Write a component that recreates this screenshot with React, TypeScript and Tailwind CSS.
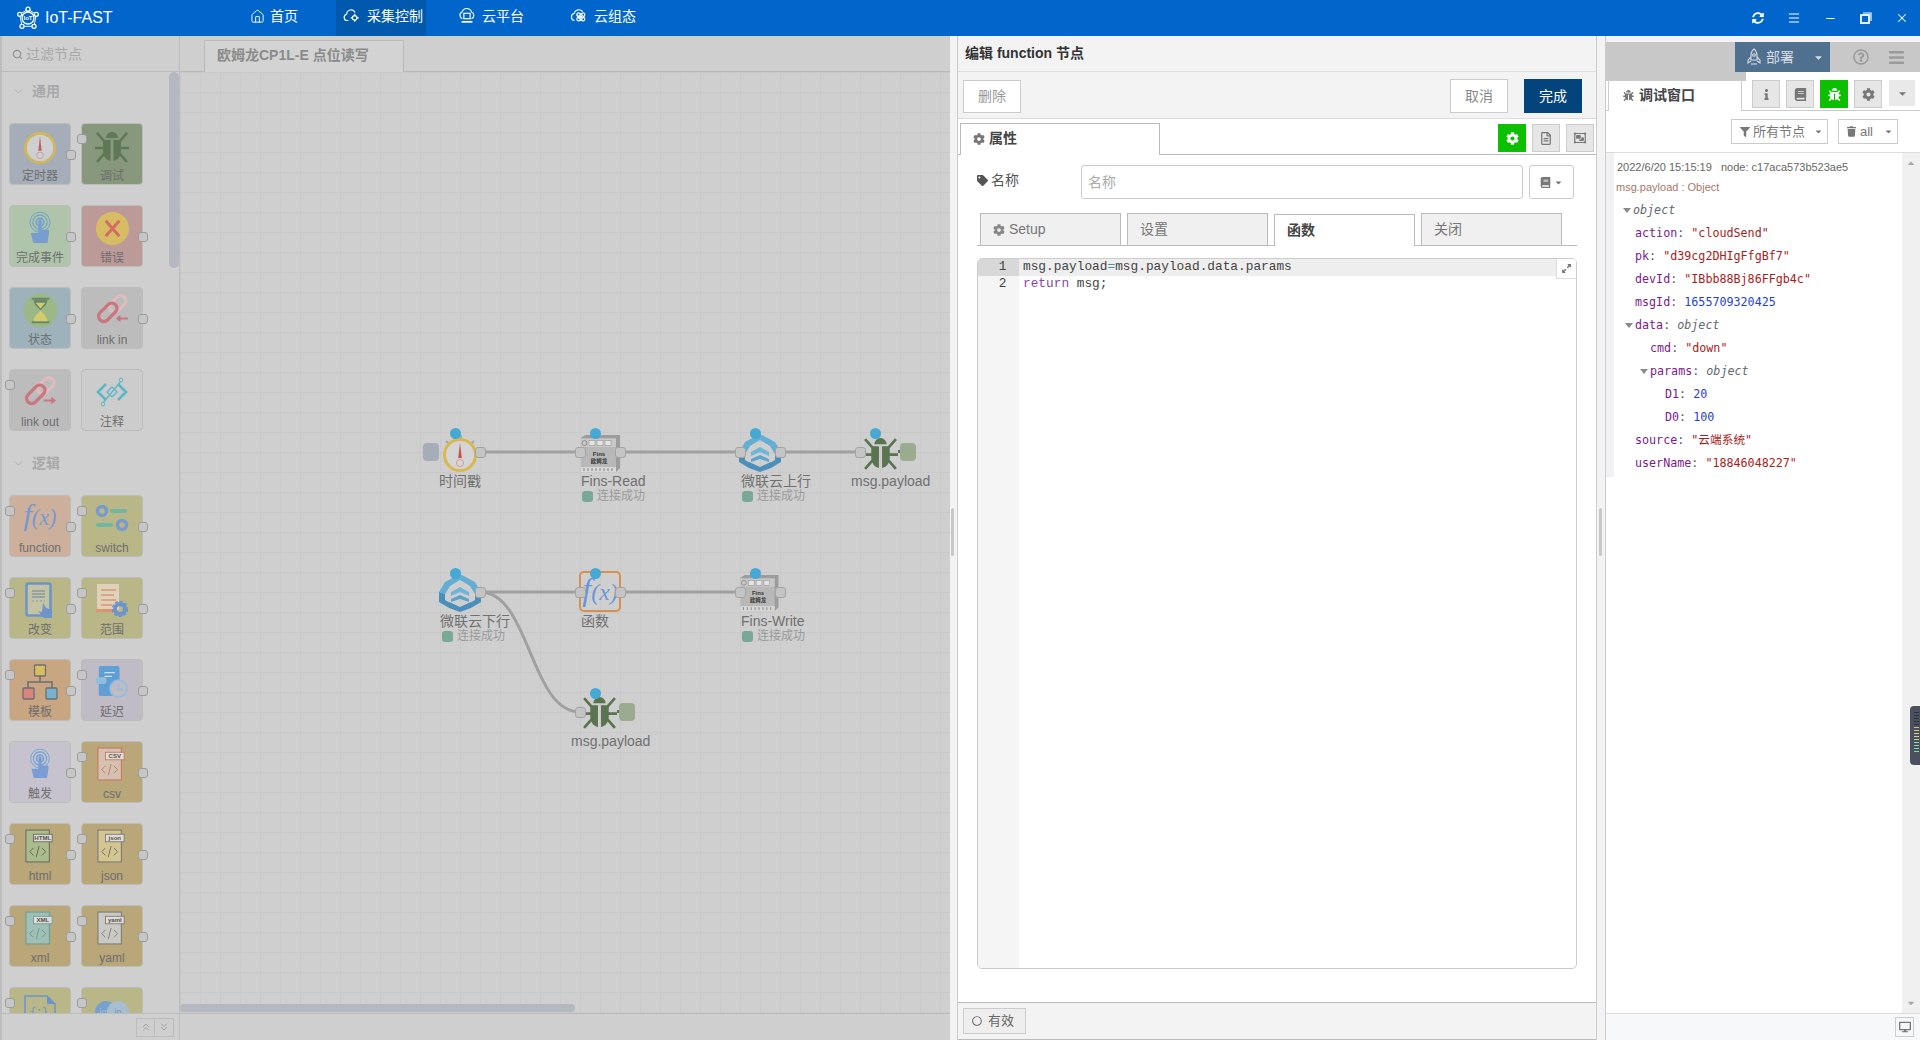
import React from 'react';
import { Home, ChevronDown, Search, ChevronsUp, ChevronsDown, Minus, X, Menu } from 'lucide-react';
import { FaCog, FaTag, FaBook, FaBug, FaFilter, FaTrash, FaInfo, FaRegFileAlt, FaCaretDown, FaRegQuestionCircle, FaBars, FaRegCircle, FaDesktop, FaSyncAlt, FaCaretUp } from 'react-icons/fa';
import { FaRegObjectGroup, FaUpRightAndDownLeftFromCenter } from 'react-icons/fa6';

const sans = { fontFamily: '"Liberation Sans", "Noto Sans CJK SC", sans-serif' };

// ---- node icons ----
const Stopwatch = ({ className = '' }: { className?: string }) => (
  <svg viewBox="0 0 36 38" className={className}>
    <path d="M4 7l3 3M32 7l-3 3" stroke="#a9a9a9" strokeWidth="2" />
    <rect x="16" y="1" width="4" height="5" fill="#a9a9a9" />
    <circle cx="18" cy="21" r="15.5" fill="#d5d5d5" stroke="#d8b84f" strokeWidth="3" />
    <path d="M18 9l1.8 15h-3.6z" fill="#c4524a" />
    <circle cx="18" cy="29" r="3.6" fill="none" stroke="#dc9a9a" />
  </svg>
);

const Bug = ({ className = '' }: { className?: string }) => (
  <svg viewBox="0 0 34 36" className={className}>
    <g fill="#5a7350">
      <path d="M11 10a6 6 0 0 1 12 0z" />
      <path d="M8 12h7.5v21C11 32 8 28 8 23z" />
      <path d="M26 12h-7.5v21c4.500-1 7.500-5 7.500-10z" />
    </g>
    <path d="M2 5l7 8M32 5l-7 8M0 20h9M34 20h-9M2 34l7-8M32 34l-7-8" stroke="#5a7350" strokeWidth="2.600" />
  </svg>
);

const Touch = ({ className = '' }: { className?: string }) => (
  <svg viewBox="0 0 36 40" className={className}>
    <g fill="none" stroke="#5f9fd8">
      <circle cx="18" cy="13" r="12" strokeWidth="1.200" />
      <circle cx="18" cy="13" r="8.500" strokeWidth="1.500" />
      <circle cx="18" cy="13" r="4.500" strokeWidth="2" />
    </g>
    <path d="M16 12a2 2 0 0 1 4 0v10h7c2 0 2 1 2 3l-2 13H10L7 26h9z" fill="#6f97d8" />
  </svg>
);

const ErrorBadge = ({ className = '' }: { className?: string }) => (
  <svg viewBox="0 0 36 36" className={className}>
    <circle cx="18" cy="18" r="17" fill="#dcc25c" />
    <path d="M11 10l14 16M25 10L11 26" stroke="#d8645c" strokeWidth="3" />
  </svg>
);

const Hourglass = ({ className = '' }: { className?: string }) => (
  <svg viewBox="0 0 36 36" className={className}>
    <circle cx="18" cy="18" r="17.500" fill="#9dba7e" />
    <path d="M9 6h18M9 30h18" stroke="#5f7f5c" strokeWidth="2" />
    <path d="M11 7h14c0 6-5 8-7 11-2-3-7-5-7-11z" fill="#5f7f5c" />
    <path d="M18 18c2 3 7 5 7 11H11c0-6 5-8 7-11z" fill="#dcd25c" />
    <path d="M13 10h10l-5 6z" fill="#dcd25c" />
  </svg>
);

const LinkIcon = ({ className = '', dir }: { className?: string; dir: 'in' | 'out' }) => (
  <svg viewBox="0 0 34 34" className={className}>
    <rect x="13" y="5" width="20" height="11" rx="5.500" transform="rotate(-45 23 10.500)" fill="none" stroke="#e4bcc0" strokeWidth="3.500" />
    <rect x="1" y="14" width="23" height="11" rx="5.500" transform="rotate(-45 12.500 19.500)" fill="none" stroke="#cd6a74" strokeWidth="3.500" />
    {dir === 'in' ? (
      <path d="M34 25h-8v-3l-5 4 5 4v-3h8z" fill="#cd6a74" />
    ) : (
      <path d="M21 27h8v3l5-4-5-4v3h-8z" fill="#cd6a74" />
    )}
  </svg>
);

const Comment = ({ className = '' }: { className?: string }) => (
  <svg viewBox="0 0 32 32" className={className}>
    <path d="M10 8L2 16l8 8M22 8l8 8-8 8" fill="none" stroke="#45b4c8" strokeWidth="2.500" />
    <path d="M16 11l-5 5 5 5M16 11l5 5-5 5M7 27L25 5" fill="none" stroke="#45b4c8" strokeWidth="1.200" />
    <circle cx="25" cy="4" r="1.800" fill="#d0d0d0" stroke="#45b4c8" />
    <circle cx="7" cy="28" r="1.800" fill="#d0d0d0" stroke="#45b4c8" />
  </svg>
);

const Fx = ({ className = '' }: { className?: string }) => (
  <svg viewBox="0 0 40 36" className={className}>
    <text x="20" y="26" textAnchor="middle" fontFamily='"Liberation Serif", serif' fontStyle="italic" fill="#6a96d8">
      <tspan fontSize="34">f</tspan>
      <tspan fontSize="25">(x)</tspan>
    </text>
  </svg>
);

const SwitchIcon = ({ className = '' }: { className?: string }) => (
  <svg viewBox="0 0 34 28" className={className}>
    <circle cx="7" cy="7" r="4.500" fill="none" stroke="#6f97d8" strokeWidth="3.500" />
    <rect x="15" y="5" width="17" height="4" rx="2" fill="#63b8a8" />
    <rect x="1" y="19" width="17" height="4" rx="2" fill="#63b8a8" />
    <circle cx="27" cy="21" r="4.500" fill="none" stroke="#6f97d8" strokeWidth="3.500" />
  </svg>
);

const ChangeIcon = ({ className = '' }: { className?: string }) => (
  <svg viewBox="0 0 30 36" className={className}>
    <rect x="1.500" y="1.500" width="24" height="32" rx="2" fill="#c6c6a8" stroke="#5f8fd8" strokeWidth="2.500" />
    <path d="M7 9h13M7 12h13M7 15h13" stroke="#7f94a8" strokeWidth="1.500" />
    <path d="M7 19h13" stroke="#7f94a8" strokeDasharray="2 2" />
    <path d="M18 21l3 5 6 2v8H19l-6-7 4 1z" fill="#5f8fd8" />
  </svg>
);

const RangeIcon = ({ className = '' }: { className?: string }) => (
  <svg viewBox="0 0 32 34" className={className}>
    <rect x="1" y="1" width="22" height="26" fill="#e6d6c4" />
    <path d="M5 7h15M5 12h13M5 17h15M5 22h11" stroke="#e0906c" strokeWidth="1.700" />
    <rect x="0" y="26" width="18" height="3" fill="#e0906c" />
    <circle cx="24" cy="26" r="5" fill="none" stroke="#5f8fd8" strokeWidth="4" />
    <circle cx="24" cy="26" r="7.500" fill="none" stroke="#5f8fd8" strokeWidth="1.500" strokeDasharray="3 2" />
  </svg>
);

const TemplateIcon = ({ className = '' }: { className?: string }) => (
  <svg viewBox="0 0 36 36" className={className}>
    <path d="M18 12v6M6 24v-6h24v6" fill="none" stroke="#5b6670" strokeWidth="1.600" />
    <rect x="12.500" y="1" width="11" height="11" rx="1" fill="#dcc25c" stroke="#5b6670" strokeWidth="1.300" />
    <rect x="1" y="24" width="11" height="11" rx="1" fill="#dc7f80" stroke="#5b6670" strokeWidth="1.300" />
    <rect x="24" y="24" width="11" height="11" rx="1" fill="#6cb4dc" stroke="#5b6670" strokeWidth="1.300" />
  </svg>
);

const DelayIcon = ({ className = '' }: { className?: string }) => (
  <svg viewBox="0 0 34 34" className={className}>
    <rect x="3" y="0" width="22" height="32" rx="2" fill="#4f9bd8" />
    <path d="M9 7h11M9 11h8" stroke="#d5e4f0" strokeWidth="1.500" />
    <rect x="0" y="12" width="11" height="7" rx="2" fill="#8fbce0" />
    <circle cx="24" cy="24" r="9" fill="#c0bcc6" stroke="#8fbce0" strokeWidth="2" />
    <path d="M24 19v6h5" fill="none" stroke="#8fbce0" strokeWidth="2" />
  </svg>
);

const DocIcon = ({ className = '', tag, fill, stroke, code }: { className?: string; tag: string; fill: string; stroke: string; code: string }) => (
  <svg viewBox="0 0 32 36" className={className}>
    <rect x="1" y="1" width="25" height="34" fill={fill} stroke={stroke} strokeWidth="1.200" />
    <rect x="9" y="5.500" width="20" height="8" fill="#e6e6e6" stroke={stroke} />
    <text x="19" y="12" textAnchor="middle" fontSize="6.500" fontWeight="700" fontFamily='"Liberation Sans", sans-serif' fill="#444">{tag}</text>
    <path d="M9 20l-4 4 4 4M18 20l4 4-4 4M15 18l-3 12" fill="none" stroke={code} strokeWidth="1" />
  </svg>
);

const JsonFile = ({ className = '' }: { className?: string }) => (
  <svg viewBox="0 0 34 30" className={className}>
    <path d="M2 1h22l8 8v20H2z" fill="none" stroke="#5f8fd8" strokeWidth="1.500" />
    <path d="M24 1v8h8z" fill="#5f8fd8" />
    <text x="16" y="20" textAnchor="middle" fontSize="10" fontFamily='"Liberation Mono", monospace' fill="#5f8fd8">{'{;}'}</text>
  </svg>
);

const InIcon = ({ className = '' }: { className?: string }) => (
  <svg viewBox="0 0 36 20" className={className}>
    <circle cx="12" cy="12" r="11" fill="#6f9fd8" />
    <circle cx="24" cy="12" r="11" fill="#a5c0dc" />
    <text x="24" y="15" textAnchor="middle" fontSize="9" fontFamily='"Liberation Sans", sans-serif' fill="#5f8fd8">in</text>
    <text x="9" y="15" textAnchor="middle" fontSize="9" fontFamily='"Liberation Sans", sans-serif' fill="#a5c0dc">io</text>
  </svg>
);

const Fins = ({ className = '' }: { className?: string }) => (
  <svg viewBox="0 0 40 38" className={className}>
    <path d="M0 3l4-3h35v33l-4 4z" fill="#9c9c9c" />
    <rect x="0" y="3" width="35" height="34" fill="#b8b8b8" />
    <rect x="0" y="4" width="35" height="8" fill="#c8c8c8" />
    <circle cx="3.500" cy="8" r="2.500" fill="none" stroke="#777" strokeWidth=".7" />
    <rect x="8" y="5.500" width="6" height="5" fill="#e4e4e4" stroke="#888" strokeWidth=".5" />
    <rect x="16" y="5.500" width="6" height="5" fill="#e4e4e4" stroke="#888" strokeWidth=".5" />
    <rect x="24" y="5.500" width="6" height="5" fill="#e4e4e4" stroke="#888" strokeWidth=".5" />
    <text x="18" y="21" textAnchor="middle" fontSize="6" fontWeight="700" fontFamily='"Liberation Sans", sans-serif' fill="#333">Fins</text>
    <text x="18" y="27.500" textAnchor="middle" fontSize="5.500" fontWeight="700" fontFamily='"Noto Sans CJK SC", sans-serif' fill="#333">欧姆龙</text>
    <rect x="0" y="32" width="35" height="5" fill="#d8d8d8" />
    <path d="M3 33v3M7 33v3M11 33v3M15 33v3M19 33v3M23 33v3M27 33v3M31 33v3" stroke="#666" strokeWidth=".7" />
  </svg>
);

const Weilian = ({ className = '' }: { className?: string }) => (
  <svg viewBox="0 0 42 38" className={className}>
    <path d="M21 0L6 8 0 18l6 2 5-8 10-6z" fill="#64aed4" />
    <path d="M21 0l15 8 6 10-6 2-5-8-10-6z" fill="#64aed4" />
    <path d="M0 18v10l10 6 1-5-5-3v-6z" fill="#4a8fbc" />
    <path d="M42 18v10l-10 6-1-5 5-3v-6z" fill="#4a8fbc" />
    <path d="M10 28l11 5 11-5v6l-11 4-11-4z" fill="#4a8fbc" />
    <path d="M12 18l9-5 9 5v4l-9-4-9 4z" fill="#6fb5d8" />
    <path d="M12 25l9-4 9 4v3l-9-3-9 3z" fill="#5aa5cc" />
  </svg>
);

const CloudNav = ({ kind }: { kind: 'gear' | 'pc' | 'atom' }) => (
  <svg viewBox="0 0 20 20" className="w-[18px] h-[18px]" fill="none" stroke="white" strokeWidth="1.300">
    {kind === 'gear' && (
      <>
        <path d="M6 15H5a3.500 3.500 0 0 1-1-6.900A5 5 0 0 1 13.500 6" />
        <circle cx="13" cy="12" r="2.500" />
        <path d="M13 7.500v2M13 14.500v2M8.500 12h2M15.500 12h2" />
      </>
    )}
    {kind === 'pc' && (
      <>
        <path d="M5 13a4 4 0 0 1-.5-7.500 5.500 5.500 0 0 1 10.500 0A4 4 0 0 1 15 13" />
        <rect x="6.500" y="7" width="7" height="6" />
        <path d="M4 16.500h12" strokeWidth="2" />
      </>
    )}
    {kind === 'atom' && (
      <>
        <path d="M5 15a4 4 0 0 1-.5-7.800A5.500 5.500 0 0 1 14 5" />
        <circle cx="12" cy="11" r="1.300" fill="white" />
        <ellipse cx="12" cy="11" rx="5.500" ry="2.500" transform="rotate(45 12 11)" />
        <ellipse cx="12" cy="11" rx="5.500" ry="2.500" transform="rotate(-45 12 11)" />
      </>
    )}
  </svg>
);

// ---- palette ----
interface TileProps {
  label?: string;
  bg: string;
  icon: React.ReactNode;
  input?: boolean;
  output?: boolean;
}

const Tile = ({ label, bg, icon, input = true, output = true }: TileProps) => (
  <div className={`relative w-[62px] h-[62px] rounded-[4px] border border-[#bcbcbc] ${bg}`}>
    <div className="h-[44px] flex items-center justify-center opacity-85">{icon}</div>
    {label && <div className="text-center text-[12px] leading-[16px] text-[#6e6e6e] whitespace-nowrap">{label}</div>}
    {input && <span className="absolute left-[-5px] top-[10px] w-[10px] h-[10px] rounded-[3px] bg-[#c6c6c6] border border-[#9c9c9c]" />}
    {output && <span className="absolute right-[-6px] top-[26px] w-[10px] h-[10px] rounded-[3px] bg-[#c6c6c6] border border-[#9c9c9c]" />}
  </div>
);

const generalTiles: TileProps[] = [
  { label: '定时器', bg: 'bg-[#a5adb9]', input: false, icon: <Stopwatch className="w-[34px] h-[36px]" /> },
  { label: '调试', bg: 'bg-[#87987c]', output: false, icon: <Bug className="w-[34px] h-[36px]" /> },
  { label: '完成事件', bg: 'bg-[#afc4ab]', input: false, icon: <Touch className="w-[30px] h-[36px]" /> },
  { label: '错误', bg: 'bg-[#bc9a97]', input: false, icon: <ErrorBadge className="w-[35px] h-[35px]" /> },
  { label: '状态', bg: 'bg-[#9db2bb]', input: false, icon: <Hourglass className="w-[35px] h-[35px]" /> },
  { label: 'link in', bg: 'bg-[#bcbcbc]', input: false, icon: <LinkIcon dir="in" className="w-[32px] h-[32px]" /> },
  { label: 'link out', bg: 'bg-[#bcbcbc]', output: false, icon: <LinkIcon dir="out" className="w-[32px] h-[32px]" /> },
  { label: '注释', bg: 'bg-[#cccccc]', input: false, output: false, icon: <Comment className="w-[32px] h-[32px]" /> },
];

const logicTiles: TileProps[] = [
  { label: 'function', bg: 'bg-[#ccb09c]', icon: <Fx className="w-[36px] h-[32px]" /> },
  { label: 'switch', bg: 'bg-[#b9b687]', icon: <SwitchIcon className="w-[34px] h-[28px]" /> },
  { label: '改变', bg: 'bg-[#b9b687]', icon: <ChangeIcon className="w-[30px] h-[36px]" /> },
  { label: '范围', bg: 'bg-[#b9b687]', icon: <RangeIcon className="w-[32px] h-[34px]" /> },
  { label: '模板', bg: 'bg-[#c9a682]', icon: <TemplateIcon className="w-[36px] h-[36px]" /> },
  { label: '延迟', bg: 'bg-[#c0bcc6]', icon: <DelayIcon className="w-[32px] h-[34px]" /> },
  { label: '触发', bg: 'bg-[#c6c3cf]', input: false, icon: <Touch className="w-[28px] h-[34px]" /> },
  { label: 'csv', bg: 'bg-[#b9a679]', icon: <DocIcon tag="CSV" fill="#d8c8bc" stroke="#d0705c" code="#d0705c" className="w-[30px] h-[36px]" /> },
  { label: 'html', bg: 'bg-[#b9a679]', icon: <DocIcon tag="HTML" fill="#a8bf90" stroke="#5f6a60" code="#4f5a50" className="w-[30px] h-[36px]" /> },
  { label: 'json', bg: 'bg-[#b9a679]', icon: <DocIcon tag="json" fill="#d8cc98" stroke="#777" code="#666" className="w-[30px] h-[36px]" /> },
  { label: 'xml', bg: 'bg-[#b9a679]', icon: <DocIcon tag="XML" fill="#9fc4c0" stroke="#5ca0a4" code="#4f9aa4" className="w-[30px] h-[36px]" /> },
  { label: 'yaml', bg: 'bg-[#b9a679]', icon: <DocIcon tag="yaml" fill="#ccd0d4" stroke="#777" code="#777" className="w-[30px] h-[36px]" /> },
  { bg: 'bg-[#b9b687]', icon: <JsonFile className="w-[34px] h-[30px]" /> },
  { bg: 'bg-[#b9b687]', icon: <InIcon className="w-[36px] h-[28px]" /> },
];

const Section = ({ title, tiles, className = '' }: { title: string; tiles: TileProps[]; className?: string }) => (
  <div className={className}>
    <div className="h-[38px] mb-[13px] flex items-center pl-[10px] gap-[7px] text-[#a8a8a8]">
      <ChevronDown size={13} strokeWidth={1.500} />
      <span className="text-[14px] font-bold">{title}</span>
    </div>
    <div className="grid grid-cols-[62px_62px] gap-x-[10px] gap-y-[20px] pl-[7px]">
      {tiles.map((t, i) => <Tile key={i} {...t} />)}
    </div>
  </div>
);

// ---- flow canvas helpers ----
const Port = ({ className }: { className: string }) => (
  <span className={`absolute w-[11px] h-[11px] rounded-[3px] bg-[#c4c4c4] border border-[#a3a3a3] ${className}`} />
);
const Dot = ({ className }: { className: string }) => (
  <span className={`absolute w-[11px] h-[11px] rounded-full bg-[#45a9d4] ${className}`} />
);
const Label = ({ className, children }: { className: string; children: React.ReactNode }) => (
  <span className={`absolute text-[14px] leading-[16px] text-[#707070] whitespace-nowrap ${className}`}>{children}</span>
);
const Status = ({ className }: { className: string }) => (
  <span className={`absolute flex items-center gap-[4px] text-[12px] leading-[12px] text-[#9a9a9a] whitespace-nowrap ${className}`}>
    <span className="w-[11px] h-[11px] rounded-[3px] bg-[#7aa896]" />
    连接成功
  </span>
);

const code = { fontFamily: '"Liberation Mono", monospace' };
const tree = { fontFamily: '"DejaVu Sans Mono", "Noto Sans CJK SC", monospace' };

const Key = ({ children }: { children: React.ReactNode }) => <span className="text-[#7d1a8c]">{children}</span>;
const Str = ({ children }: { children: React.ReactNode }) => <span className="text-[#a81c1c]">{children}</span>;
const Num = ({ children }: { children: React.ReactNode }) => <span className="text-[#1f3fd0]">{children}</span>;
const Obj = () => <span className="italic text-[#5f6a72]">object</span>;
const Arrow = () => (
  <svg viewBox="0 0 8 5" className="w-[8px] h-[5px] mr-[2px] shrink-0" fill="#8a8a8a"><path d="M0 0h8L4 5z" /></svg>
);

const Row = ({ className = '', children }: { className?: string; children: React.ReactNode }) => (
  <div className={`h-[23px] flex items-center whitespace-pre ${className}`}>{children}</div>
);

export default function App() {
  return (
    <div className="w-[1920px] h-[1040px] flex flex-col overflow-hidden bg-white" style={sans}>
      {/* top bar */}
      <header className="h-[36px] shrink-0 bg-[#0066cc] text-white flex items-center">
        <div className="w-[204px] pl-[16px] flex items-center gap-[5px]">
          <svg viewBox="0 0 26 26" className="w-[24px] h-[24px]" fill="none" stroke="white" strokeWidth="1.400">
            <path d="M13 3.500L4 9l2.500 13h13L22 9z" strokeWidth="1" />
            <circle cx="13" cy="13" r="6.500" fill="#0066cc" />
            <circle cx="13" cy="3.500" r="2.200" fill="#0066cc" />
            <circle cx="4" cy="9" r="2.200" fill="#0066cc" />
            <circle cx="22" cy="9" r="2.200" fill="#0066cc" />
            <circle cx="6.500" cy="22" r="2.200" fill="#0066cc" />
            <circle cx="19.500" cy="22" r="2.200" fill="#0066cc" />
            <text x="13" y="15.500" textAnchor="middle" fontSize="6.500" fontWeight="700" stroke="none" fill="white">IoT</text>
          </svg>
          <span className="text-[16px] leading-[36px]">IoT-FAST</span>
        </div>
        <nav className="flex items-center h-full pl-[46px] text-[14px]">
          <div className="flex items-center gap-[5px] w-[86px] pb-[4px]"><Home size={15} strokeWidth={1.500} />首页</div>
          <div className="flex items-center gap-[6px] h-full w-[90px] pl-[7px] pb-[4px] bg-[#0059ac]"><CloudNav kind="gear" />采集控制</div>
          <div className="flex items-center gap-[6px] w-[110px] pl-[32px] pb-[4px]"><CloudNav kind="pc" />云平台</div>
          <div className="flex items-center gap-[6px] pl-[34px] pb-[4px]"><CloudNav kind="atom" />云组态</div>
        </nav>
        <div className="ml-auto flex items-center h-full">
          <FaSyncAlt className="w-[12px] h-[12px] mr-[23px]" />
          <Menu size={14} strokeWidth={1.800} className="mr-[23px]" />
          <Minus size={13} strokeWidth={1.800} className="mr-[23px]" />
          <svg viewBox="0 0 12 12" className="w-[12px] h-[12px] mr-[23px]" fill="none" stroke="white" strokeWidth="1.200">
            <rect x="1" y="3" width="8" height="8" strokeWidth="1.800" />
            <path d="M3 1h8v8" />
          </svg>
          <X size={14} strokeWidth={1.800} className="mr-[11px]" />
        </div>
      </header>

      <div className="flex-1 flex min-h-0">
        {/* dimmed workspace */}
        <div className="w-[950px] shrink-0 flex bg-[#cfcfcf]">
          <aside className="w-[180px] shrink-0 flex flex-col border-l-2 border-r border-[#bcbcbc]">
            <div className="h-[36px] shrink-0 flex items-center pl-[10px] pt-[1px] gap-[3px] text-[14px] text-[#a8a8a8] border-b border-[#bcbcbc]">
              <Search size={11} strokeWidth={2.500} className="text-[#8f8f8f]" />
              过滤节点
            </div>
            <div className="relative flex-1 min-h-0 overflow-hidden">
              <Section title="通用" tiles={generalTiles} />
              <Section title="逻辑" tiles={logicTiles} className="mt-[13px]" />
              <div className="absolute right-0 top-0 w-[10px] h-[196px] rounded-[5px] bg-[#b5b8c0]" />
            </div>
            <div className="h-[27px] shrink-0 border-t border-[#bcbcbc] flex justify-end items-center pr-[5px] bg-[#cfcfcf]">
              <span className="w-[19px] h-[19px] border border-[#bcbcbc] flex items-center justify-center text-[#a0a0a0]"><ChevronsUp size={12} /></span>
              <span className="w-[19px] h-[19px] border border-l-0 border-[#bcbcbc] flex items-center justify-center text-[#a0a0a0]"><ChevronsDown size={12} /></span>
            </div>
          </aside>

          <main className="flex-1 min-w-0 flex flex-col">
            <div className="h-[36px] shrink-0 border-b border-[#b8b8b8] pl-[24px] pt-[4px]">
              <div className="w-[200px] h-[32px] border border-b-0 border-[#b8b8b8] bg-[#d2d3d2] pl-[12px] text-[14px] leading-[29px] font-bold text-[#8a8a8a] whitespace-nowrap">欧姆龙CP1L-E 点位读写</div>
            </div>
            <div className="relative flex-1 min-h-0 overflow-hidden bg-[linear-gradient(#c9c9c9_1px,transparent_1px),linear-gradient(90deg,#c9c9c9_1px,transparent_1px)] bg-[size:20px_20px]">
              <svg className="absolute inset-0 w-full h-full" fill="none" stroke="#a0a0a0" strokeWidth="3">
                <path d="M300 380H400M440 380H560M600 380H680" />
                <path d="M300 520H400M440 520H560" />
                <path d="M300 520C350 520 350 640 400 640" />
              </svg>

              {/* row one */}
              <span className="absolute left-[243px] top-[371px] w-[16px] h-[18px] rounded-[4px] bg-[#a5adb9]" />
              <Stopwatch className="absolute left-[262px] top-[362px] w-[36px] h-[38px]" />
              <Dot className="left-[270px] top-[356px]" />
              <Port className="left-[295px] top-[375px]" />
              <Label className="left-[259px] top-[401px]">时间戳</Label>

              <Fins className="absolute left-[401px] top-[363px] w-[40px] h-[38px]" />
              <Dot className="left-[410px] top-[356px]" />
              <Port className="left-[395px] top-[375px]" />
              <Port className="left-[435px] top-[375px]" />
              <Label className="left-[401px] top-[401px]">Fins-Read</Label>
              <Status className="left-[402px] top-[418px]" />

              <Weilian className="absolute left-[559px] top-[362px] w-[42px] h-[38px]" />
              <Dot className="left-[570px] top-[356px]" />
              <Port className="left-[555px] top-[375px]" />
              <Port className="left-[595px] top-[375px]" />
              <Label className="left-[561px] top-[401px]">微联云上行</Label>
              <Status className="left-[562px] top-[418px]" />

              <span className="absolute left-[718px] top-[378px] w-[4px] h-[3px] bg-[#5a7350]" />
              <Bug className="absolute left-[683px] top-[362px] w-[35px] h-[37px]" />
              <Dot className="left-[690px] top-[356px]" />
              <Port className="left-[675px] top-[375px]" />
              <span className="absolute left-[720px] top-[371px] w-[16px] h-[18px] rounded-[4px] bg-[#9aab90]" />
              <Label className="left-[671px] top-[401px]">msg.payload</Label>

              {/* row two */}
              <Weilian className="absolute left-[259px] top-[502px] w-[42px] h-[38px]" />
              <Dot className="left-[270px] top-[496px]" />
              <Port className="left-[295px] top-[515px]" />
              <Label className="left-[260px] top-[541px]">微联云下行</Label>
              <Status className="left-[262px] top-[558px]" />

              <div className="absolute left-[399px] top-[499px] w-[42px] h-[41px] rounded-[5px] border-2 border-[#d89050] flex items-center justify-center overflow-hidden">
                <Fx className="w-[42px] h-[38px]" />
              </div>
              <Dot className="left-[410px] top-[496px]" />
              <Port className="left-[395px] top-[515px]" />
              <Port className="left-[435px] top-[515px]" />
              <Label className="left-[401px] top-[541px]">函数</Label>

              <Fins className="absolute left-[560px] top-[503px] w-[40px] h-[37px]" />
              <Dot className="left-[570px] top-[496px]" />
              <Port className="left-[555px] top-[515px]" />
              <Port className="left-[595px] top-[515px]" />
              <Label className="left-[561px] top-[541px]">Fins-Write</Label>
              <Status className="left-[562px] top-[558px]" />

              <span className="absolute left-[437px] top-[638px] w-[4px] h-[3px] bg-[#5a7350]" />
              <Bug className="absolute left-[402px] top-[621px] w-[35px] h-[37px]" />
              <Dot className="left-[410px] top-[616px]" />
              <Port className="left-[395px] top-[635px]" />
              <span className="absolute left-[439px] top-[631px] w-[16px] h-[18px] rounded-[4px] bg-[#9aab90]" />
              <Label className="left-[391px] top-[661px]">msg.payload</Label>

              <div className="absolute left-0 bottom-[1px] w-[395px] h-[8px] rounded-[4px] bg-[#b5b8c0]" />
            </div>
            <div className="h-[27px] shrink-0 border-t border-[#bcbcbc]" />
          </main>
        </div>

        {/* edit tray */}
        <div className="w-[7px] shrink-0 bg-[#f3f3f3] flex items-center pl-[1px] pb-[12px]">
          <span className="w-[3px] h-[48px] rounded-[2px] bg-[#c8c8c8]" />
        </div>
        <section className="w-[640px] shrink-0 flex flex-col border-x border-[#cccccc] text-[#555]">
          <div className="h-[36px] shrink-0 bg-[#f3f3f3] border-b border-[#dddddd] flex items-center pl-[7px] text-[#333] text-[14px] font-bold">编辑 function 节点</div>
          <div className="h-[47px] shrink-0 bg-[#f3f3f3] border-b border-[#dddddd] flex items-start pt-[7px] pl-[5px] pr-[7px] text-[14px]">
            <button className="mt-[1px] w-[58px] h-[33px] bg-white border border-[#cccccc] text-[#999]">删除</button>
            <button className="ml-auto w-[58px] h-[34px] bg-white border border-[#cccccc] text-[#888]">取消</button>
            <button className="ml-[16px] mr-[7px] w-[58px] h-[34px] bg-[#03447c] text-white">完成</button>
          </div>
          <div className="h-[36px] shrink-0 border-b border-[#bbbbbb] flex items-end pl-[2px] pr-[2px]">
            <div className="w-[200px] h-[32px] -mb-px bg-white border border-b-0 border-[#bbbbbb] flex items-center pb-[2px] pl-[12px] gap-[4px] text-[14px] text-[#444] font-bold">
              <FaCog className="w-[12px] h-[12px] text-[#777]" />属性
            </div>
            <div className="ml-auto flex gap-[6px] mb-[2px]">
              <span className="w-[28px] h-[28px] bg-[#0cc000] flex items-center justify-center"><FaCog className="w-[13px] h-[13px] text-white" /></span>
              <span className="w-[28px] h-[28px] bg-[#e6e6e6] border border-[#cccccc] flex items-center justify-center"><FaRegFileAlt className="w-[12px] h-[13px] text-[#777]" /></span>
              <span className="w-[28px] h-[28px] bg-[#e6e6e6] border border-[#cccccc] flex items-center justify-center"><FaRegObjectGroup className="w-[14px] h-[14px] text-[#777]" /></span>
            </div>
          </div>

          <div className="flex-1 min-h-0 flex flex-col bg-white">
            <div className="h-[34px] mt-[10px] shrink-0 flex items-center pl-[19px]">
              <FaTag className="w-[11px] h-[11px] text-[#555] mb-[3px]" />
              <span className="ml-[3px] w-[90px] text-[14px] mb-[3px]">名称</span>
              <div className="w-[442px] h-full border border-[#cccccc] rounded-[3px] flex items-center pl-[6px] text-[14px] text-[#aaa]">名称</div>
              <div className="ml-[6px] w-[45px] h-full border border-[#cccccc] rounded-[3px] flex items-center justify-center gap-[3px] text-[#777]">
                <FaBook className="w-[11px] h-[11px]" /><FaCaretDown className="w-[9px] h-[9px]" />
              </div>
            </div>

            <div className="mt-[15px] mx-[19px] h-[32px] shrink-0 border-b border-[#bbbbbb] flex items-end pl-[3px] gap-[6px] text-[14px]">
              <div className="w-[141px] h-[32px] bg-[#f0f0f0] border border-b-0 border-[#bbbbbb] flex items-center pl-[12px] gap-[4px] text-[#777]"><FaCog className="w-[12px] h-[12px] text-[#888]" />Setup</div>
              <div className="w-[141px] h-[32px] bg-[#f0f0f0] border border-b-0 border-[#bbbbbb] flex items-center pl-[12px] text-[#777]">设置</div>
              <div className="w-[141px] h-[32px] -mb-px bg-white border border-b-0 border-[#bbbbbb] flex items-center pl-[12px] font-bold text-[#444]">函数</div>
              <div className="w-[141px] h-[32px] bg-[#f0f0f0] border border-b-0 border-[#bbbbbb] flex items-center pl-[12px] text-[#777]">关闭</div>
            </div>

            <div className="relative mt-[12px] mx-[19px] h-[711px] shrink-0 border border-[#cccccc] rounded-[5px] overflow-hidden flex text-[12.800px] leading-[15px]" style={code}>
              <div className="w-[41px] bg-[#f5f5f5] text-center text-[#444]">
                <div className="h-[17px] bg-[#d8d8d8] pl-[8px]">1</div>
                <div className="h-[17px] pl-[8px]">2</div>
              </div>
              <div className="flex-1 min-w-0 text-[#444]">
                <div className="h-[17px] bg-[#eeeeee] pl-[4px]">msg.payload<span className="text-[#5a8a9a]">=</span>msg.payload.data.params</div>
                <div className="h-[17px] pl-[4px]"><span className="text-[#8a45a8]">return</span> msg;</div>
              </div>
              <span className="absolute right-0 top-0 w-[20px] h-[20px] bg-white border-l border-b border-[#dddddd] flex items-center justify-center text-[#777]">
                <FaUpRightAndDownLeftFromCenter className="w-[9px] h-[9px]" />
              </span>
            </div>

            <div className="mt-auto h-[37px] shrink-0 bg-[#f3f3f3] border-t border-[#bbbbbb] flex items-center pl-[5px]">
              <div className="w-[63px] h-[26px] bg-[#eeeeee] border border-[#cccccc] flex items-center pl-[8px] gap-[6px] text-[13px] text-[#666]">
                <FaRegCircle className="w-[10px] h-[10px]" />有效
              </div>
            </div>
          </div>
          <div className="h-[1px] shrink-0 bg-[#bbbbbb]" />
        </section>

        <div className="w-[8px] shrink-0 bg-[#f3f3f3] flex items-center pl-[2px] pb-[12px]">
          <span className="w-[3px] h-[48px] rounded-[2px] bg-[#c8c8c8]" />
        </div>

        {/* debug sidebar */}
        <aside className="relative flex-1 min-w-0 flex flex-col border-l border-[#cccccc] text-[#555]">
          <div className="h-[6px] shrink-0 bg-[#f3f3f3]" />
          <div className="h-[30px] shrink-0 bg-[#c8c8c8] flex items-center">
            <div className="ml-[129px] w-[95px] h-[30px] bg-[#50708f] flex items-center pl-[11px] text-[14px] text-[#d6dde4]">
              <svg viewBox="0 0 16 18" className="w-[16px] h-[18px] mr-[4px]" fill="none" stroke="#d6dde4" strokeWidth="1.100">
                <path d="M8 1c3 2 3.500 6 3 11H5C4.500 7 5 3 8 1z" />
                <path d="M5 9l-3 3v3l3-2M11 9l3 3v3l-3-2M6 15v2M8 15v2M10 15v2" />
                <circle cx="8" cy="7" r="1.300" />
              </svg>
              部署
              <FaCaretDown className="ml-auto mr-[6px] w-[11px] h-[11px]" />
            </div>
            <FaRegQuestionCircle className="ml-[23px] w-[16px] h-[16px] text-[#9a9a9a]" />
            <FaBars className="ml-[19px] w-[17px] h-[17px] text-[#9a9a9a]" />
          </div>
          <div className="relative h-[39px] shrink-0 flex items-end border-b border-[#cccccc]">
            <div className="absolute left-0 top-0 w-[140px] h-[9px] bg-[#c8c8c8]" />
            <div className="relative ml-[2px] w-[134px] h-[31px] -mb-px bg-white border border-b-0 border-[#cccccc] flex items-center pb-[2px] pl-[14px] gap-[5px] text-[14px] font-bold text-[#444]">
              <FaBug className="w-[11px] h-[11px] text-[#777]" />调试窗口
            </div>
            <div className="flex gap-[6px] ml-[10px] mb-[2px]">
              <span className="w-[28px] h-[28px] bg-[#e6e6e6] border border-[#cccccc] flex items-center justify-center"><FaInfo className="w-[11px] h-[11px] text-[#777]" /></span>
              <span className="w-[28px] h-[28px] bg-[#e6e6e6] border border-[#cccccc] flex items-center justify-center"><FaBook className="w-[13px] h-[13px] text-[#777]" /></span>
              <span className="w-[28px] h-[28px] bg-[#0cc000] flex items-center justify-center"><FaBug className="w-[13px] h-[13px] text-white" /></span>
              <span className="w-[28px] h-[28px] bg-[#e6e6e6] border border-[#cccccc] flex items-center justify-center"><FaCog className="w-[13px] h-[13px] text-[#777]" /></span>
              <span className="ml-[1px] w-[26px] h-[26px] bg-[#e9e9e9] flex items-center justify-center"><FaCaretDown className="w-[11px] h-[11px] text-[#777]" /></span>
            </div>
          </div>
          <div className="h-[42px] shrink-0 border-b border-[#dddddd] flex items-start pt-[8px] pl-[125px] text-[13px] text-[#777]">
            <div className="w-[97px] h-[25px] border border-[#cccccc] flex items-center pl-[8px] gap-[3px]">
              <FaFilter className="w-[10px] h-[10px]" />所有节点<FaCaretDown className="ml-auto mr-[4px] w-[9px] h-[9px]" />
            </div>
            <div className="ml-[10px] w-[60px] h-[25px] border border-[#cccccc] flex items-center pl-[8px] gap-[4px]">
              <FaTrash className="w-[9px] h-[11px]" />all<FaCaretDown className="ml-auto mr-[4px] w-[9px] h-[9px]" />
            </div>
          </div>

          <div className="flex-1 min-h-0 flex">
            <div className="flex-1 min-w-0">
              <div className="border-l-[8px] border-[#f0f1f3] w-[288px] border-r-0">
                <div className="h-[26px] flex items-center pl-[3px] pt-[2px] text-[11px] text-[#666] whitespace-pre">2022/6/20 15:15:19   node: c17aca573b523ae5</div>
                <div className="h-[14px] flex items-center pl-[2px] pt-[2px] text-[11px] text-[#a87868]">msg.payload : Object</div>
                <div className="pt-[6px] pb-[2px] text-[11.700px]" style={tree}>
                  <Row className="pl-[9px]"><Arrow /><Obj /></Row>
                  <Row className="pl-[21px]"><Key>action</Key>: <Str>"cloudSend"</Str></Row>
                  <Row className="pl-[21px]"><Key>pk</Key>: <Str>"d39cg2DHIgFfgBf7"</Str></Row>
                  <Row className="pl-[21px]"><Key>devId</Key>: <Str>"IBbb88Bj86FFgb4c"</Str></Row>
                  <Row className="pl-[21px]"><Key>msgId</Key>: <Num>1655709320425</Num></Row>
                  <Row className="pl-[11px]"><Arrow /><Key>data</Key>: <Obj /></Row>
                  <Row className="pl-[36px]"><Key>cmd</Key>: <Str>"down"</Str></Row>
                  <Row className="pl-[26px]"><Arrow /><Key>params</Key>: <Obj /></Row>
                  <Row className="pl-[51px]"><Key>D1</Key>: <Num>20</Num></Row>
                  <Row className="pl-[51px]"><Key>D0</Key>: <Num>100</Num></Row>
                  <Row className="pl-[21px]"><Key>source</Key>: <Str>"云端系统"</Str></Row>
                  <Row className="pl-[21px]"><Key>userName</Key>: <Str>"18846048227"</Str></Row>
                </div>
              </div>
            </div>
            <div className="w-[18px] shrink-0 bg-[#f0f0f0] flex flex-col items-center justify-between py-[5px] text-[#a8a8a8]">
              <FaCaretUp className="w-[10px] h-[10px]" />
              <FaCaretDown className="w-[10px] h-[10px]" />
            </div>
          </div>

          <div className="h-[27px] shrink-0 bg-[#f7f8fa] border-t border-[#dddddd] flex items-center justify-end pr-[6px]">
            <span className="w-[19px] h-[20px] border border-[#cccccc] flex items-center justify-center"><FaDesktop className="w-[12px] h-[12px] text-[#777]" /></span>
          </div>

          {/* floating meter tab */}
          <div className="absolute right-0 top-[670px] w-[10px] h-[59px] rounded-l-[4px] bg-[#4a5060] flex flex-col gap-[2px] pl-[4px] pt-[6px]">
            <span className="h-[1px] w-[5px] bg-[#30343f]" />
            <span className="h-[1px] w-[5px] bg-[#30343f]" />
            <span className="h-[1px] w-[5px] bg-[#30343f]" />
            <span className="h-[1px] w-[5px] bg-[#30343f]" />
            <span className="h-[1px] w-[5px] bg-[#30343f]" />
            <span className="h-[1px] w-[5px] bg-[#e8c060]" />
            <span className="h-[1px] w-[5px] bg-[#e8c060]" />
            <span className="h-[1px] w-[5px] bg-[#e8d070]" />
            <span className="h-[1px] w-[5px] bg-[#d8d880]" />
            <span className="h-[1px] w-[5px] bg-[#b8dc88]" />
            <span className="h-[1px] w-[5px] bg-[#a0dc90]" />
            <span className="h-[1px] w-[5px] bg-[#90dca0]" />
            <span className="h-[1px] w-[5px] bg-[#80dcb0]" />
            <span className="h-[1px] w-[5px] bg-[#70dcc0]" />
          </div>
        </aside>
      </div>
    </div>
  );
}
